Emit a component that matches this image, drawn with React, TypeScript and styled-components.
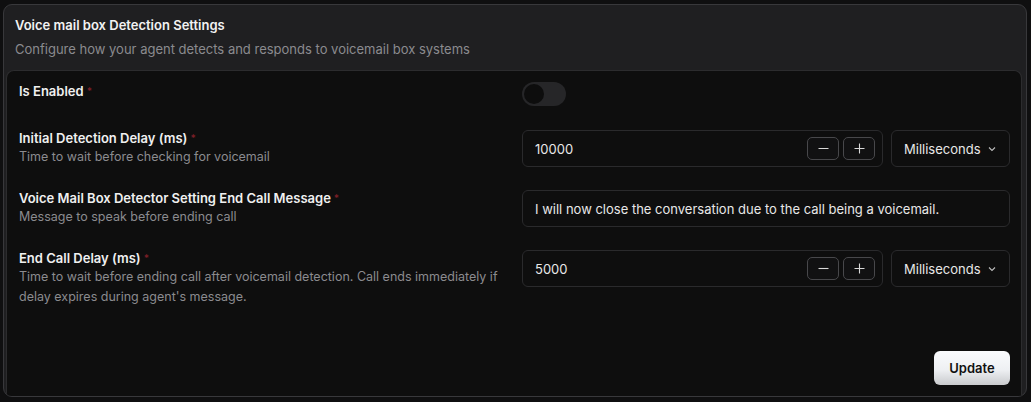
import React from 'react';
import styled, { createGlobalStyle } from 'styled-components';

const GlobalStyle = createGlobalStyle`
  * { box-sizing: border-box; }
  html, body {
    margin: 0;
    padding: 0;
    background: #0f0f10;
    font-family: Inter, "Noto Sans", "Liberation Sans", sans-serif;
    color: #ededed;
  }
`;

const Page = styled.div`
  width: 1031px;
  height: 402px;
  padding: 4px 4px 5px 3px;
`;

const Card = styled.section`
  height: 100%;
  display: flex;
  flex-direction: column;
  background: #1f1f21;
  border: 1px solid #38383b;
  border-radius: 9px;
  overflow: hidden;
`;

const CardHeader = styled.header`
  padding: 10px 11px 12px 11px;
`;

const CardTitle = styled.h2`
  margin: 0;
  font-size: 13px;
  line-height: 20px;
  font-weight: 600;
  color: #f2f2f2;
`;

const CardSubtitle = styled.p`
  margin: 5px 0 0;
  font-size: 13px;
  line-height: 18px;
  color: #8b8b8f;
`;

const Panel = styled.div`
  flex: 1;
  margin: 0 4px 0 2px;
  display: flex;
  flex-direction: column;
  padding: 11px 11px 11px 12px;
  background: #0e0e0e;
  border: 1px solid #2c2c2e;
  border-bottom: none;
  border-radius: 8px 8px 0 0;
`;

const Fields = styled.div`
  display: flex;
  flex-direction: column;
  gap: 23px;
`;

const Row = styled.div<{ $minHeight?: number }>`
  display: grid;
  grid-template-columns: 488px 488px;
  column-gap: 15px;
  align-items: start;
  min-height: ${(p) => p.$minHeight ?? 0}px;
`;

const LabelBlock = styled.div<{ $offset?: number }>`
  padding-top: ${(p) => p.$offset ?? 0}px;
`;

const Label = styled.div`
  font-size: 13px;
  line-height: 16px;
  font-weight: 600;
  color: #f0f0f0;
`;

const Required = styled.span`
  color: #7a1f27;
  font-size: 10px;
  margin-left: 3px;
  vertical-align: top;
`;

const Description = styled.div`
  margin-top: 1px;
  font-size: 12.5px;
  line-height: 20px;
  color: #8b8b8f;
`;

const Switch = styled.div`
  width: 44px;
  height: 24px;
  border-radius: 12px;
  background: #262628;
  padding: 2px;
`;

const Knob = styled.div`
  width: 20px;
  height: 20px;
  border-radius: 50%;
  background: #0d0d0d;
`;

const Controls = styled.div`
  display: flex;
  gap: 8px;
`;

const InputBox = styled.div`
  flex: 1;
  height: 37px;
  display: flex;
  align-items: center;
  padding: 0 7px 0 12px;
  background: #0e0e0e;
  border: 1px solid #2a2a2c;
  border-radius: 6px;
  font-size: 13px;
  color: #e8e8e8;
`;

const InputText = styled.span`
  flex: 1;
`;

const Stepper = styled.div`
  display: flex;
  gap: 4px;
`;

const StepButton = styled.div`
  width: 32px;
  height: 23px;
  display: flex;
  align-items: center;
  justify-content: center;
  border: 1px solid #48484b;
  border-radius: 5px;
  background: #111112;
  color: #d8d8d8;
`;

const Select = styled.div`
  width: 119px;
  height: 37px;
  display: flex;
  align-items: center;
  justify-content: space-between;
  padding: 0 12px 0 12px;
  border: 1px solid #2a2a2c;
  border-radius: 6px;
  font-size: 13px;
  color: #e8e8e8;
`;

const Footer = styled.div`
  margin-top: auto;
  display: flex;
  justify-content: flex-end;
`;

const UpdateButton = styled.button`
  width: 76px;
  height: 34px;
  border: none;
  border-radius: 6px;
  background: linear-gradient(to bottom, #fafbfd 0%, #eef0f3 55%, #c9cacd 100%);
  font-family: inherit;
  font-size: 13px;
  font-weight: 600;
  color: #111;
`;

const Minus = () => (
  <svg width="13" height="13" viewBox="0 0 13 13" fill="none" stroke="currentColor" strokeWidth="1.1">
    <path d="M1.5 6.5h10" />
  </svg>
);

const Plus = () => (
  <svg width="13" height="13" viewBox="0 0 13 13" fill="none" stroke="currentColor" strokeWidth="1.1">
    <path d="M1.5 6.5h10M6.5 1.5v10" />
  </svg>
);

const Chevron = () => (
  <svg width="10" height="10" viewBox="0 0 10 10" fill="none" stroke="#bdbdbd" strokeWidth="1.1">
    <path d="M2 3.5l3 3 3-3" />
  </svg>
);

const NumberField = ({ value }: { value: string }) => (
  <Controls>
    <InputBox>
      <InputText>{value}</InputText>
      <Stepper>
        <StepButton><Minus /></StepButton>
        <StepButton><Plus /></StepButton>
      </Stepper>
    </InputBox>
    <Select>
      Milliseconds
      <Chevron />
    </Select>
  </Controls>
);

const App = () => (
  <>
    <GlobalStyle />
    <Page>
      <Card>
        <CardHeader>
          <CardTitle>Voice mail box Detection Settings</CardTitle>
          <CardSubtitle>Configure how your agent detects and responds to voicemail box systems</CardSubtitle>
        </CardHeader>
        <Panel>
          <Fields>
            <Row $minHeight={25}>
              <LabelBlock $offset={1}>
                <Label>Is Enabled<Required>*</Required></Label>
              </LabelBlock>
              <Switch><Knob /></Switch>
            </Row>
            <Row>
              <LabelBlock>
                <Label>Initial Detection Delay (ms)<Required>*</Required></Label>
                <Description>Time to wait before checking for voicemail</Description>
              </LabelBlock>
              <NumberField value="10000" />
            </Row>
            <Row>
              <LabelBlock>
                <Label>Voice Mail Box Detector Setting End Call Message<Required>*</Required></Label>
                <Description>Message to speak before ending call</Description>
              </LabelBlock>
              <InputBox>
                <InputText>I will now close the conversation due to the call being a voicemail.</InputText>
              </InputBox>
            </Row>
            <Row>
              <LabelBlock>
                <Label>End Call Delay (ms)<Required>*</Required></Label>
                <Description>
                  Time to wait before ending call after voicemail detection. Call ends immediately if delay expires during agent's message.
                </Description>
              </LabelBlock>
              <NumberField value="5000" />
            </Row>
          </Fields>
          <Footer>
            <UpdateButton>Update</UpdateButton>
          </Footer>
        </Panel>
      </Card>
    </Page>
  </>
);

export default App;
